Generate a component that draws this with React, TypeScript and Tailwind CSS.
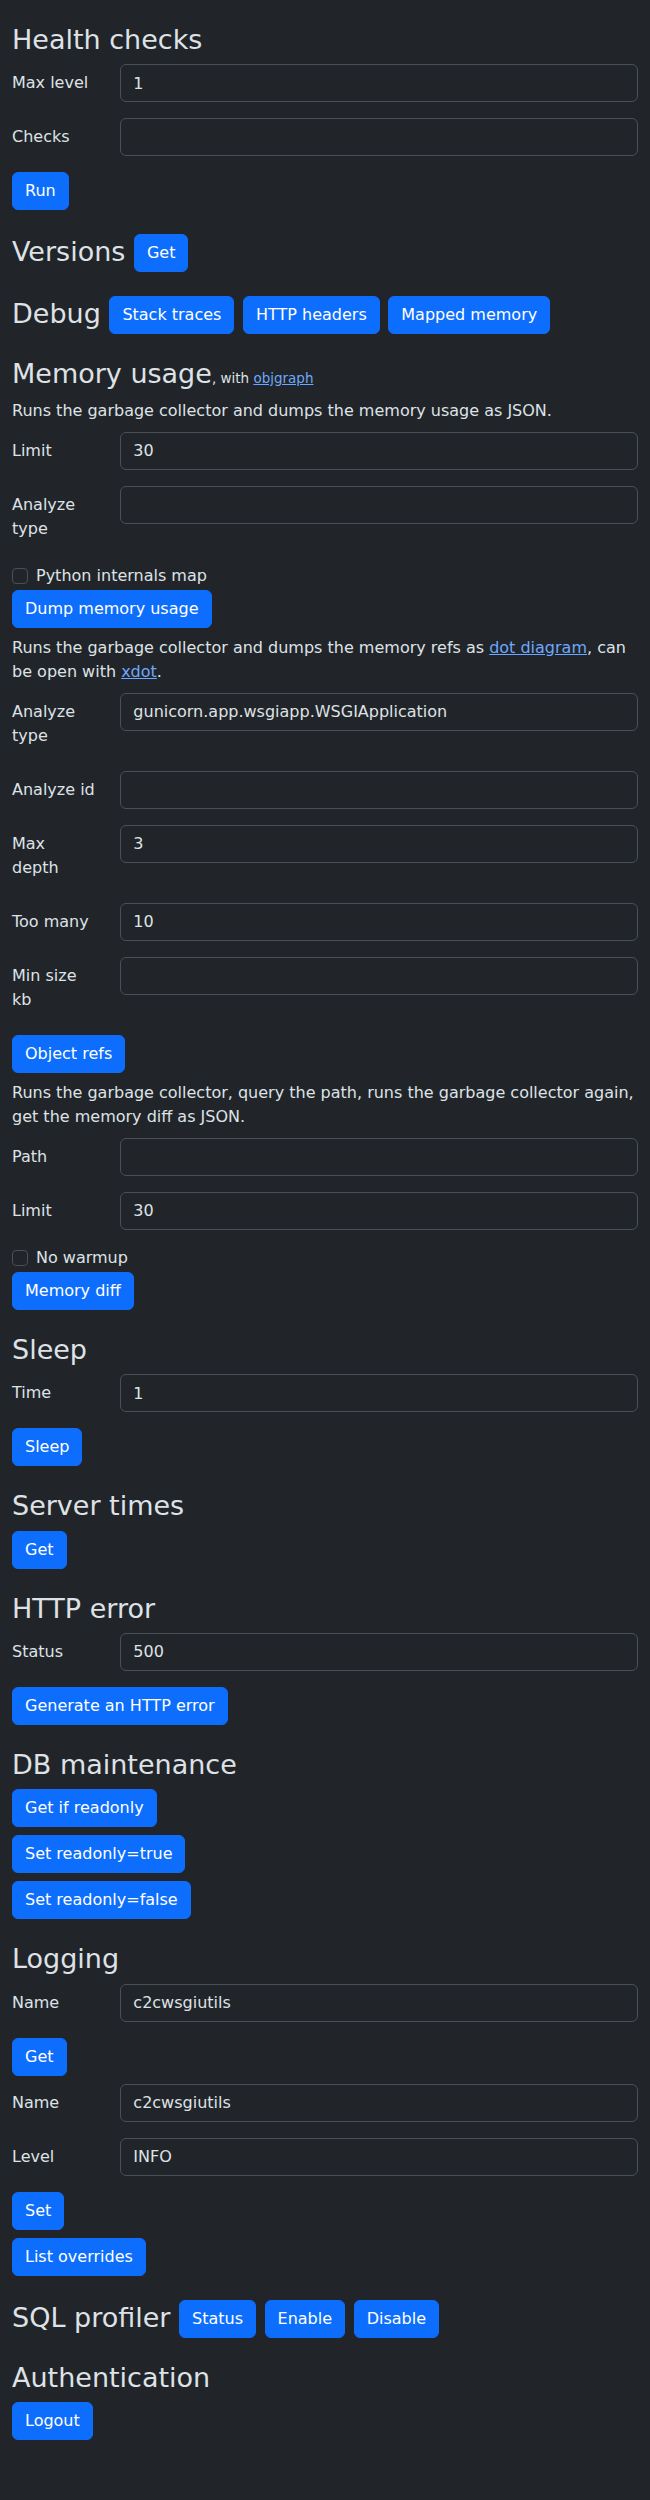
import React from "react";

function H2({ children }: { children: React.ReactNode }) {
  return (
    <h2 className="mt-6 mb-2 text-[27px] leading-[1.2] font-medium text-[#dee2e6]">
      {children}
    </h2>
  );
}

function Btn({ children, inline }: { children: React.ReactNode; inline?: boolean }) {
  const cls =
    "rounded-[6px] border border-[#0d6efd] bg-[#0d6efd] px-3 py-1.5 text-base leading-6 font-normal text-white";
  if (inline) {
    return <button className={"inline-block align-middle " + cls}>{children}</button>;
  }
  return (
    <div className="flex">
      <button className={cls}>{children}</button>
    </div>
  );
}

function Row({ label, value }: { label: React.ReactNode; value?: string }) {
  return (
    <div className="mb-4 grid grid-cols-[84.33px_minmax(0,1fr)] gap-x-6">
      <label className="py-[7px] leading-6 whitespace-nowrap">{label}</label>
      <div>
        <input
          readOnly
          value={value ?? ""}
          className="block h-[38px] w-full rounded-[6px] border border-[#495057] bg-[#212529] px-3 py-1.5 text-base leading-6 text-[#dee2e6] outline-none"
        />
      </div>
    </div>
  );
}

function Check({ label }: { label: string }) {
  return (
    <div className="mb-0.5 flex min-h-6 items-start gap-2">
      <input
        type="checkbox"
        className="mt-1 h-4 w-4 shrink-0 appearance-none rounded-[4px] border border-[#495057] bg-[#212529]"
      />
      <label className="leading-6">{label}</label>
    </div>
  );
}

function Link({ children }: { children: React.ReactNode }) {
  return <a className="text-[#6ea8fe] underline">{children}</a>;
}

export default function App() {
  return (
    <div className="flow-root min-h-screen bg-[#212529] px-3 font-['DejaVu_Sans',sans-serif] text-base leading-6 text-[#dee2e6]">
      <H2>Health checks</H2>
      <Row label="Max level" value="1" />
      <Row label="Checks" />
      <Btn>Run</Btn>

      <H2>
        Versions <Btn inline>Get</Btn>
      </H2>

      <H2>
        Debug <Btn inline>Stack traces</Btn> <Btn inline>HTTP headers</Btn>{" "}
        <Btn inline>Mapped memory</Btn>
      </H2>

      <H2>
        Memory usage
        <span className="text-[13.5px]">
          , with <Link>objgraph</Link>
        </span>
      </H2>
      <p className="mb-[9px]">Runs the garbage collector and dumps the memory usage as JSON.</p>
      <Row label="Limit" value="30" />
      <Row
        label={
          <>
            Analyze
            <br />
            type
          </>
        }
      />
      <Check label="Python internals map" />
      <Btn>Dump memory usage</Btn>
      <p className="mt-2 mb-[9px]">
        Runs the garbage collector and dumps the memory refs as <Link>dot diagram</Link>, can be
        open with <Link>xdot</Link>.
      </p>
      <Row
        label={
          <>
            Analyze
            <br />
            type
          </>
        }
        value="gunicorn.app.wsgiapp.WSGIApplication"
      />
      <Row label="Analyze id" />
      <Row
        label={
          <>
            Max
            <br />
            depth
          </>
        }
        value="3"
      />
      <Row label="Too many" value="10" />
      <Row
        label={
          <>
            Min size
            <br />
            kb
          </>
        }
      />
      <Btn>Object refs</Btn>
      <p className="mt-2 mb-[9px]">
        Runs the garbage collector, query the path, runs the garbage collector again, get the memory
        diff as JSON.
      </p>
      <Row label="Path" />
      <Row label="Limit" value="30" />
      <Check label="No warmup" />
      <Btn>Memory diff</Btn>

      <H2>Sleep</H2>
      <Row label="Time" value="1" />
      <Btn>Sleep</Btn>

      <H2>Server times</H2>
      <Btn>Get</Btn>

      <H2>HTTP error</H2>
      <Row label="Status" value="500" />
      <Btn>Generate an HTTP error</Btn>

      <H2>DB maintenance</H2>
      <div className="mb-2">
        <Btn>Get if readonly</Btn>
      </div>
      <div className="mb-2">
        <Btn>Set readonly=true</Btn>
      </div>
      <Btn>Set readonly=false</Btn>

      <H2>Logging</H2>
      <Row label="Name" value="c2cwsgiutils" />
      <div className="mb-2">
        <Btn>Get</Btn>
      </div>
      <Row label="Name" value="c2cwsgiutils" />
      <Row label="Level" value="INFO" />
      <div className="mb-2">
        <Btn>Set</Btn>
      </div>
      <Btn>List overrides</Btn>

      <H2>
        SQL profiler <Btn inline>Status</Btn> <Btn inline>Enable</Btn> <Btn inline>Disable</Btn>
      </H2>

      <H2>Authentication</H2>
      <Btn>Logout</Btn>
    </div>
  );
}
